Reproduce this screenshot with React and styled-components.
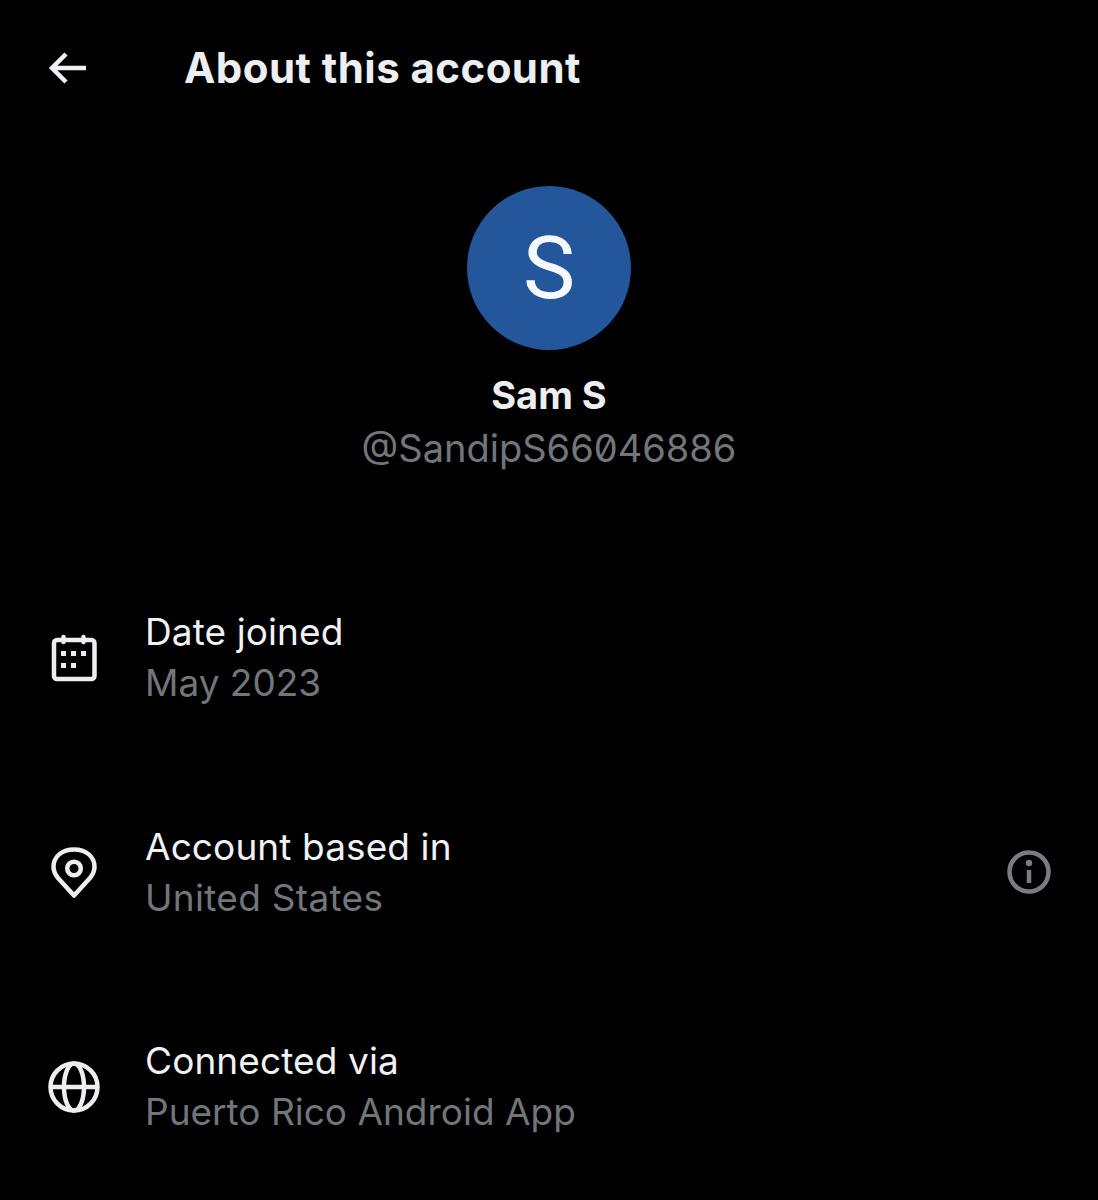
import React from "react";
import styled, { createGlobalStyle } from "styled-components";

const Global = createGlobalStyle`
  html, body { margin: 0; padding: 0; background: #000; }
  body { font-family: "Inter", "Noto Sans", sans-serif; }
`;

const Page = styled.div`
  width: 1098px;
  height: 1200px;
  background: #000;
  color: #eff1f3;
  overflow: hidden;
  display: flex;
  flex-direction: column;
`;

const Header = styled.header`
  display: flex;
  align-items: center;
  height: 50px;
  margin-top: 43px;
  padding-left: 48px;
`;

const BackIcon = styled.svg`
  width: 40px;
  height: 36px;
  flex: none;
  margin-right: 96px;
`;

const Title = styled.h1`
  margin: 0;
  font-size: 42px;
  line-height: 50px;
  font-weight: 700;
  letter-spacing: 0.45px;
  color: #eceef0;
`;

const Profile = styled.section`
  display: flex;
  flex-direction: column;
  align-items: center;
  margin-top: 93px;
`;

const Avatar = styled.div`
  width: 164px;
  height: 164px;
  border-radius: 50%;
  background: #23569b;
  color: #f6f8fb;
  font-family: "Roboto", sans-serif;
  font-size: 88px;
  line-height: 164px;
  text-align: center;
`;

const Name = styled.div`
  margin-top: 23px;
  font-size: 38px;
  line-height: 44px;
  font-weight: 700;
  color: #eceef0;
`;

const Handle = styled.div`
  margin-top: 9px;
  font-size: 38px;
  line-height: 44px;
  color: #71767b;
  font-feature-settings: "zero" 1;
`;

const Rows = styled.section`
  display: flex;
  flex-direction: column;
  gap: 112.500px;
  margin-top: 136px;
  padding: 0 47px 0 48px;
`;

const Row = styled.div`
  display: flex;
  align-items: center;
  height: 102px;
`;

const IconSlot = styled.div`
  width: 52px;
  height: 52px;
  flex: none;
  margin: 2px 45px 0 0;
  color: #eceef0;
`;

const Body = styled.div`
  flex: 1;
  min-width: 0;
`;

const Label = styled.div`
  font-size: 37px;
  line-height: 51px;
  letter-spacing: 0.1px;
  color: #eff1f3;
`;

const Value = styled.div`
  font-size: 37px;
  line-height: 51px;
  letter-spacing: ${(p) => (p.$wide ? "0.3px" : "0")};
  color: #71767b;
`;

const InfoIcon = styled.svg`
  width: 44px;
  height: 44px;
  flex: none;
  color: #797d82;
`;

const Svg = styled.svg`
  display: block;
  width: 52px;
  height: 52px;
`;

const Calendar = () => (
  <Svg viewBox="0 0 52 52" fill="none" stroke="currentColor" strokeWidth="4.500">
    <rect x="6" y="8" width="40.500" height="39" rx="3" />
    <path d="M15.500 5v5M35.500 5v5" strokeLinecap="round" />
    <g fill="currentColor" stroke="none">
      <rect x="13" y="19" width="5" height="5" />
      <rect x="23" y="19" width="5" height="5" />
      <rect x="33" y="19" width="5" height="5" />
      <rect x="13" y="31" width="5" height="5" />
      <rect x="23" y="31" width="5" height="5" />
    </g>
  </Svg>
);

const Pin = () => (
  <Svg viewBox="0 0 52 52" fill="none" stroke="currentColor" strokeWidth="4.500">
    <path d="M26 48.500 L10 31 C6 26 5.500 23 5.500 20 C5.500 9 14.500 2.500 26 2.500 C37.500 2.500 46.500 9 46.500 20 C46.500 23 46 26 42 31 Z" strokeLinejoin="round" />
    <circle cx="26" cy="21.500" r="6.800" />
  </Svg>
);

const Globe = () => (
  <Svg viewBox="0 0 52 52" fill="none" stroke="currentColor" strokeWidth="4.500">
    <circle cx="26" cy="26" r="23.500" />
    <ellipse cx="26" cy="26" rx="10" ry="23.500" />
    <path d="M2 26h48" />
  </Svg>
);

const items = [
  { label: "Date joined", value: "May 2023", Icon: Calendar },
  { label: "Account based in", value: "United States", Icon: Pin, info: true, wide: true },
  { label: "Connected via", value: "Puerto Rico Android App", Icon: Globe },
];

export default function App() {
  return (
    <Page>
      <Global />
      <Header>
        <BackIcon viewBox="0 0 40 36" fill="none" stroke="#eff1f3" strokeWidth="4.500">
          <path d="M38 18H4M18 4 4 18l14 14" />
        </BackIcon>
        <Title>About this account</Title>
      </Header>
      <Profile>
        <Avatar>S</Avatar>
        <Name>Sam S</Name>
        <Handle>@SandipS66046886</Handle>
      </Profile>
      <Rows>
        {items.map(({ label, value, Icon, info, wide }) => (
          <Row key={label}>
            <IconSlot>
              <Icon />
            </IconSlot>
            <Body>
              <Label>{label}</Label>
              <Value $wide={wide}>{value}</Value>
            </Body>
            {info && (
              <InfoIcon viewBox="0 0 44 44" fill="none" stroke="currentColor" strokeWidth="4.500">
                <circle cx="22" cy="22" r="19.500" />
                <path d="M22 20v13" />
                <circle cx="22" cy="13" r="3.200" fill="currentColor" stroke="none" />
              </InfoIcon>
            )}
          </Row>
        ))}
      </Rows>
    </Page>
  );
}
